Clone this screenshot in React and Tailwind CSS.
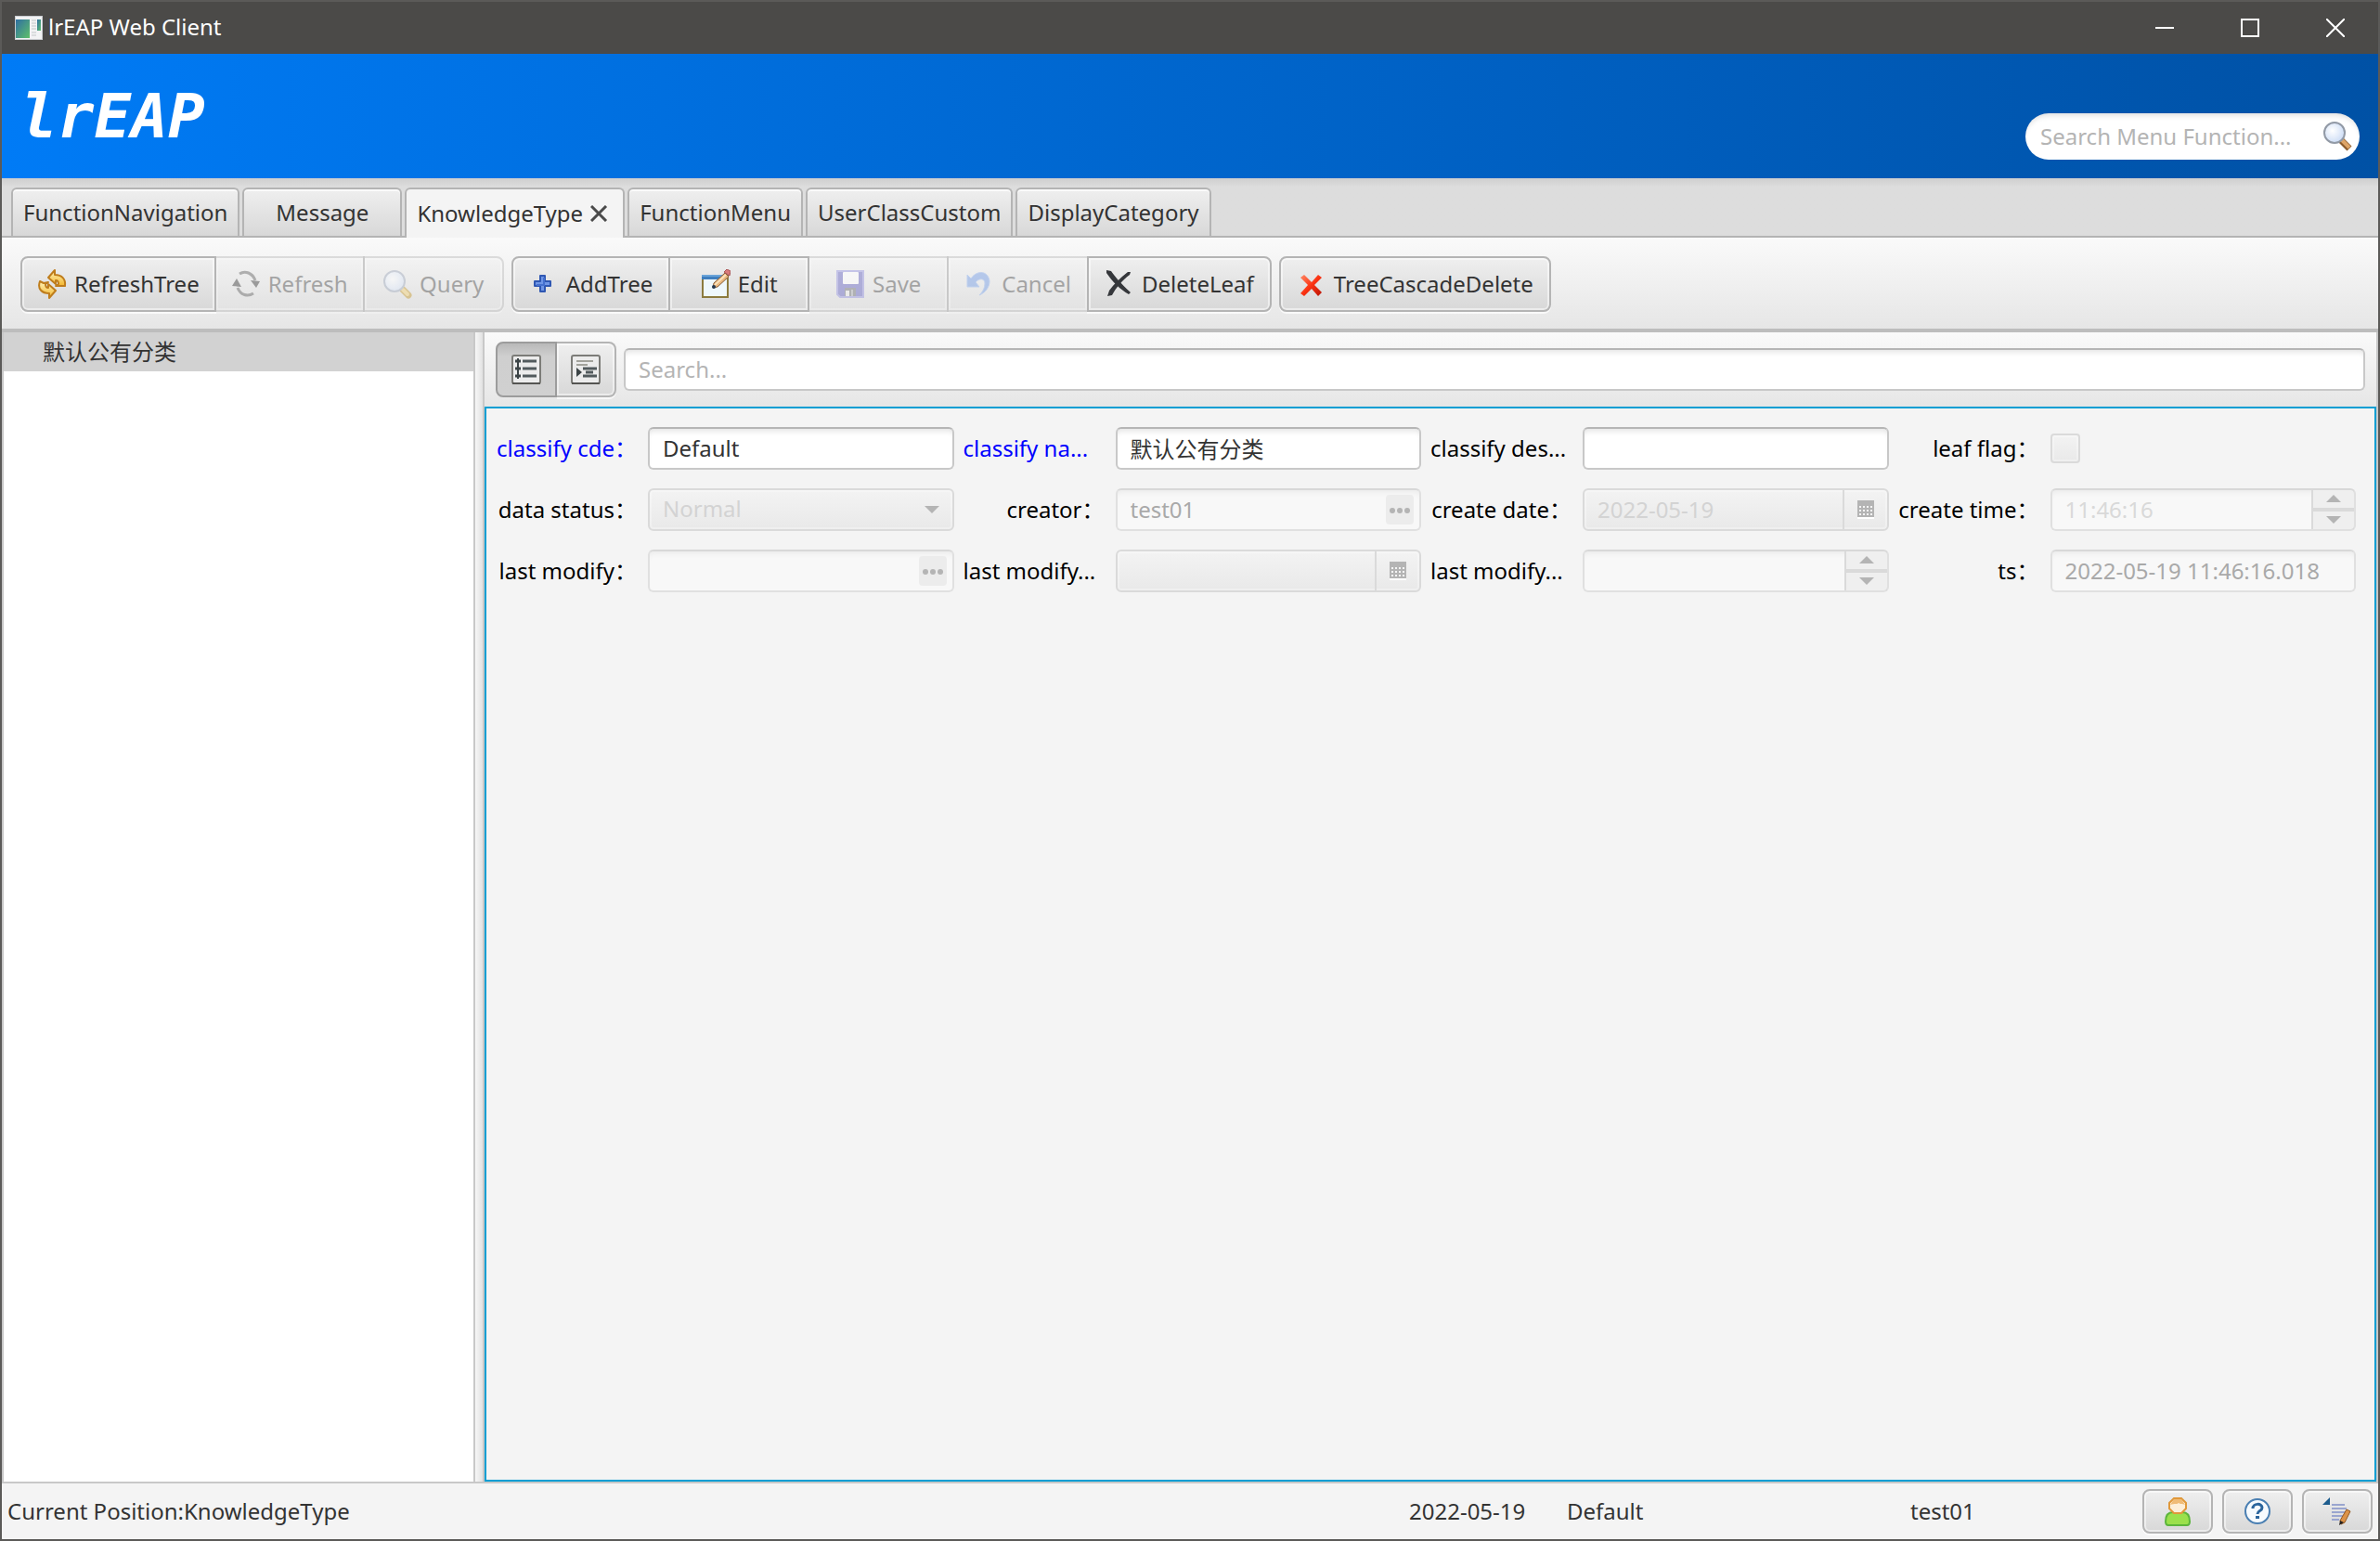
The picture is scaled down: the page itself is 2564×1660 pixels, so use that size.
import React, { useState } from "react";
import clsx from "clsx";

const AppIcon = () => (
  <svg width="30" height="26" viewBox="0 0 30 26">
    <defs>
      <linearGradient id="app" x1="0" y1="0" x2="1" y2="1">
        <stop offset="0" stopColor="#2f6fa3" />
        <stop offset="1" stopColor="#5fc06a" />
      </linearGradient>
    </defs>
    <rect x="0" y="0" width="30" height="26" fill="#c9ccd0" />
    <rect x="1" y="1" width="28" height="24" fill="#f2f3f4" />
    <rect x="1" y="4" width="15" height="20" fill="url(#app)" />
    <rect x="24" y="4" width="4" height="12" fill="url(#app)" />
    <path
      d="M18 5h5M18 8h5M18 11h5M18 14h5M18 18h5M18 21h5"
      stroke="#c3c6c9"
      strokeWidth="1"
    />
  </svg>
);

const RefreshTreeIcon = () => (
  <svg width="32" height="32" viewBox="0 0 32 32">
    <defs>
      <linearGradient id="gold" x1="0" y1="0" x2="0" y2="1">
        <stop offset="0" stopColor="#fff3b8" />
        <stop offset="1" stopColor="#f3b62e" />
      </linearGradient>
    </defs>
    <g fill="url(#gold)" stroke="#bf7d1c" strokeWidth="2" strokeLinejoin="round">
      <path d="M19 1l-7 8 8 7v-4c2 0 3 2 3 4l-3 2h10c1-7-3-12-11-12z" />
      <path d="M13 31l7-8-8-7v4c-2 0-3-2-3-4l3-2-5 1-4-2c-3 8 2 13 10 13z" />
    </g>
  </svg>
);

const RefreshIcon = () => (
  <svg width="32" height="32" viewBox="0 0 32 32" fill="none">
    <path d="M9 5c6-4 14-1 17 7" stroke="#4a4a4a" strokeWidth="3" />
    <path d="M24 26c-6 4-14 2-17-6" stroke="#4a4a4a" strokeWidth="3" />
    <path d="M21 12l10 1-4 7zM1 18l5-8 5 9z" fill="#1c1c1c" />
  </svg>
);

const LensIcon = () => (
  <svg width="32" height="32" viewBox="0 0 32 32">
    <defs>
      <radialGradient id="lens" cx="0.4" cy="0.4" r="0.7">
        <stop offset="0" stopColor="#ffffff" />
        <stop offset="1" stopColor="#c6d8f4" />
      </radialGradient>
    </defs>
    <path d="M20 20l9 9" stroke="#8a5a2c" strokeWidth="7" />
    <path d="M21 20l8 8" stroke="#dda468" strokeWidth="4" />
    <circle cx="13" cy="12" r="11" fill="url(#lens)" stroke="#929aa6" strokeWidth="2" />
  </svg>
);

const QueryIcon = () => (
  <svg width="32" height="32" viewBox="0 0 32 32">
    <path d="M22 22l6 6" stroke="#b8860b" strokeWidth="7" strokeLinecap="round" />
    <path d="M22 22l5 5" stroke="#edc45a" strokeWidth="4" strokeLinecap="round" />
    <circle cx="13" cy="13" r="11" fill="url(#lens)" stroke="#8f9bb0" strokeWidth="2" />
  </svg>
);

const PlusIcon = () => (
  <svg width="32" height="32" viewBox="0 0 32 32">
    <path
      d="M12 7h5v6h6v5h-6v6h-5v-6H6v-5h6z"
      fill="#6f96e6"
      stroke="#2f57b2"
      strokeWidth="2"
      strokeLinejoin="round"
    />
    <path d="M16 9v8H8" fill="none" stroke="#4470cf" strokeWidth="2" />
  </svg>
);

const EditIcon = () => (
  <svg width="32" height="32" viewBox="0 0 32 32">
    <rect x="2" y="7" width="27" height="23" fill="#eff8fc" stroke="#8c7b3e" strokeWidth="2" />
    <rect x="1" y="6" width="26" height="5" fill="#3f7fbf" />
    <rect x="1" y="6" width="26" height="2" fill="#6aa3d8" />
    <path d="M13 20l1-5L26 4l4 4-12 11z" fill="#e9b77d" stroke="#8a5f3a" strokeWidth="1" />
    <path d="M15 17L27 6" stroke="#fbe2bb" strokeWidth="2" />
    <path d="M25 3l3-3 4 2-1 5z" fill="#d97a7a" stroke="#a85656" strokeWidth="1" />
    <circle cx="14" cy="19" r="2" fill="#24384f" />
  </svg>
);

const SaveIcon = () => (
  <svg width="32" height="32" viewBox="0 0 32 32">
    <path d="M2 2h28v28H5l-3-3z" fill="#4c4ab5" stroke="#8280d8" strokeWidth="2" />
    <rect x="8" y="3" width="17" height="13" rx="1" fill="#fff" />
    <rect x="10" y="20" width="12" height="9" fill="#55585f" />
    <rect x="11" y="23" width="4" height="6" fill="#e8e8e8" />
    <path d="M18 22v7" stroke="#9a9da5" strokeWidth="2" />
  </svg>
);

const UndoIcon = () => (
  <svg width="32" height="32" viewBox="0 0 32 32">
    <path
      d="M3 6v13h13l-4-5c4-5 10-4 10 1 0 5-2 9-6 13 7-3 11-9 11-15C26 2 14 0 7 10z"
      fill="#5b8be0"
      stroke="#7ea5ea"
      strokeWidth="1"
    />
  </svg>
);

const CrossIcon = () => (
  <svg width="32" height="32" viewBox="0 0 32 32" fill="#35373b">
    <path d="M2 1l5 1c4 6 11 14 21 23l-2 2C17 22 8 13 2 4z" />
    <path d="M28 3l-1 3C19 12 13 19 8 28l-5 1 2-6C10 16 17 9 25 3z" />
  </svg>
);

const RedCrossIcon = () => (
  <svg width="32" height="32" viewBox="0 0 32 32" fill="none">
    <defs>
      <linearGradient id="red" x1="0" y1="0" x2="1" y2="1">
        <stop offset="0" stopColor="#ff8a66" />
        <stop offset="0.5" stopColor="#fb3212" />
        <stop offset="1" stopColor="#b81505" />
      </linearGradient>
    </defs>
    <path
      d="M4 9l4-3 8 8 7-8 4 3-8 8 8 8-4 4-7-8-8 8-4-3 8-9z"
      fill="url(#red)"
    />
  </svg>
);

const ListIcon = () => (
  <svg width="32" height="32" viewBox="0 0 32 32">
    <rect x="1" y="1" width="30" height="30" rx="2" fill="#ececec" stroke="#7c7c78" strokeWidth="2" />
    <path d="M1 31h30" stroke="#555552" strokeWidth="2" />
    <path d="M7 4v22" stroke="#3c4446" strokeWidth="2" />
    <path d="M4 7h6M4 15h6M4 23h6" stroke="#3c4446" strokeWidth="3" />
    <path d="M12 7h15M12 15h15M12 23h15" stroke="#525a5d" strokeWidth="3" />
  </svg>
);

const FormIcon = () => (
  <svg width="32" height="32" viewBox="0 0 32 32">
    <rect x="1" y="1" width="30" height="30" rx="2" fill="#ececec" stroke="#7c7c78" strokeWidth="2" />
    <path d="M1 31h30" stroke="#555552" strokeWidth="2" />
    <path d="M6 7h18M6 11h12" stroke="#a3a39c" strokeWidth="2" />
    <path d="M13 15h15M16 19h8M13 23h15" stroke="#525a5d" strokeWidth="3" />
    <path d="M6 14l6 5-6 5z" fill="#3c4446" />
  </svg>
);

const UserIcon = () => (
  <svg width="32" height="32" viewBox="0 0 32 32">
    <path
      d="M3 27c0-7 3-10 8-10h10c5 0 8 3 8 10 0 2-1 4-3 4H6c-2 0-3-2-3-4z"
      fill="#9be04c"
      stroke="#5cb53c"
      strokeWidth="2"
    />
    <path
      d="M12 2h8l5 5v6l-5 5h-8l-5-5V7z"
      fill="#fdeed8"
      stroke="#e0983a"
      strokeWidth="2"
    />
    <path d="M8 9l4-6h8l4 6c-4-2-4 0-7-2-2 2-4 0-9 2z" fill="#f0bb76" />
  </svg>
);

const HelpIcon = () => (
  <svg width="32" height="32" viewBox="0 0 32 32" fill="none">
    <circle cx="16" cy="16" r="13" fill="#f7fbfe" stroke="#4a7fb2" strokeWidth="2" />
    <path d="M11 13c0-6 10-6 10-1 0 4-5 3-5 7" stroke="#2b659c" strokeWidth="3" />
    <rect x="14" y="21" width="4" height="3" fill="#2b659c" />
  </svg>
);

const NoteIcon = () => (
  <svg width="32" height="32" viewBox="0 0 32 32">
    <path d="M8 1v8H0z" fill="#1d5c8d" />
    <path d="M10 9h14M10 13h16M10 17h16M10 21h12M10 25h8" stroke="#9aa5cf" strokeWidth="2" />
    <path d="M19 26l7-12 4 2-6 12-4 2z" fill="#dc9349" stroke="#93571f" strokeWidth="1" />
    <path d="M18 31l1-5 4 2z" fill="#222" />
  </svg>
);

const CalendarIcon = () => (
  <svg width="18" height="20" viewBox="0 0 18 20">
    <rect width="18" height="18" fill="#b4b4b4" />
    <path d="M2 7h14M2 11h14M2 15h14" stroke="#f4f4f4" strokeWidth="2" strokeDasharray="2 2" />
    <path d="M0 19h18" stroke="#fff" strokeWidth="2" />
  </svg>
);

const Triangle = ({ up }) => (
  <svg width="16" height="9" viewBox="0 0 16 9">
    <path d={up ? "M8 0l8 8H0z" : "M0 0h16L8 8z"} fill="#b4b4b4" />
  </svg>
);

const tabs = [
  "FunctionNavigation",
  "Message",
  "KnowledgeType",
  "FunctionMenu",
  "UserClassCustom",
  "DisplayCategory",
];

const toolGroups = [
  [
    { label: "RefreshTree", icon: RefreshTreeIcon },
    { label: "Refresh", icon: RefreshIcon, disabled: true },
    { label: "Query", icon: QueryIcon, disabled: true },
  ],
  [
    { label: "AddTree", icon: PlusIcon },
    { label: "Edit", icon: EditIcon },
    { label: "Save", icon: SaveIcon, disabled: true },
    { label: "Cancel", icon: UndoIcon, disabled: true },
    { label: "DeleteLeaf", icon: CrossIcon },
  ],
  [{ label: "TreeCascadeDelete", icon: RedCrossIcon }],
];

const fields = [
  { id: "cde", label: "classify cde：", type: "text", value: "Default", required: true },
  { id: "name", label: "classify na...", type: "text", value: "默认公有分类", required: true },
  { id: "desc", label: "classify des...", type: "text", value: "" },
  { id: "leaf", label: "leaf flag：", type: "check" },
  { id: "status", label: "data status：", type: "select", value: "Normal" },
  { id: "creator", label: "creator：", type: "lookup", value: "test01" },
  { id: "cdate", label: "create date：", type: "date", value: "2022-05-19" },
  { id: "ctime", label: "create time：", type: "time", value: "11:46:16" },
  { id: "modifier", label: "last modify：", type: "lookup", value: "" },
  { id: "mdate", label: "last modify...", type: "date", value: "" },
  { id: "mtime", label: "last modify...", type: "time", value: "" },
  { id: "ts", label: "ts：", type: "readonly", value: "2022-05-19 11:46:16.018" },
];

const raised =
  "bg-linear-to-b from-[#efefef] to-[#d8d8d8] border-2 border-[#b4b4b4] shadow-[inset_0_0_0_2px_rgba(255,255,255,0.5),0_2px_0_rgba(255,255,255,0.7)]";
const editable =
  "border-2 border-[#c8c8c8] border-t-[#b5b5b5] bg-white shadow-[inset_0_6px_6px_-4px_rgba(0,0,0,0.12)]";
const faded =
  "border-2 border-[#e0e0e0] border-t-[#d8d8d8] bg-[#f8f8f8] shadow-[inset_0_6px_6px_-4px_rgba(0,0,0,0.06)]";
const fadedRaised =
  "border-2 border-[#dadada] bg-linear-to-b from-[#f3f3f3] to-[#e9e9e9] shadow-[inset_0_0_0_2px_rgba(255,255,255,0.3)]";

const Field = ({ field }) => {
  const { id, type } = field;
  const [value, setValue] = useState(field.value || "");
  const base = "h-[46px] w-full rounded-md px-[14px] pb-[2px] outline-none";

  switch (type) {
    case "check":
      return (
        <input
          id={id}
          type="checkbox"
          disabled
          className={clsx("size-8 appearance-none rounded", fadedRaised)}
        />
      );
    case "select":
      return (
        <div className="relative">
          <select
            id={id}
            disabled
            defaultValue={value}
            className={clsx(base, fadedRaised, "appearance-none text-[#d3d3d3] opacity-100")}
          >
            <option>{value}</option>
          </select>
          <span className="absolute inset-y-0 right-4 flex items-center">
            <Triangle />
          </span>
        </div>
      );
    case "lookup":
      return (
        <div className={clsx("flex h-[46px] items-center rounded-md pr-[6px]", faded)}>
          <input
            id={id}
            readOnly
            value={value}
            className="min-w-0 flex-1 px-[14px] text-[#a9a9a9] outline-none"
          />
          <button
            type="button"
            aria-label="Choose"
            className="flex h-8 w-[30px] items-center justify-center rounded bg-[#ececec]"
          >
            <svg width="24" height="8" viewBox="0 0 24 8" fill="#b4b4b4">
              <circle cx="4" cy="5" r="3" />
              <circle cx="12" cy="5" r="3" />
              <circle cx="20" cy="5" r="3" />
            </svg>
          </button>
        </div>
      );
    case "date":
      return (
        <div className={clsx("flex h-[46px] rounded-md", fadedRaised)}>
          <input
            id={id}
            disabled
            value={value}
            className="min-w-0 flex-1 px-[14px] text-[#d3d3d3]"
          />
          <button
            disabled
            aria-label="Pick date"
            className="flex w-[48px] items-center justify-center border-l-2 border-[#dadada]"
          >
            <CalendarIcon />
          </button>
        </div>
      );
    case "time":
      return (
        <div className={clsx("flex h-[46px] rounded-md", faded)}>
          <input
            id={id}
            disabled
            value={value}
            className="min-w-0 flex-1 px-[14px] text-[#d9d9d9]"
          />
          <div className="flex w-[46px] flex-col gap-1 border-l-2 border-[#dadada] bg-[#dadada]">
            <button
              disabled
              aria-label="Up"
              className="flex flex-1 items-center justify-center rounded-tr bg-[#efefef]"
            >
              <Triangle up />
            </button>
            <button
              disabled
              aria-label="Down"
              className="flex flex-1 items-center justify-center rounded-br bg-[#efefef]"
            >
              <Triangle />
            </button>
          </div>
        </div>
      );
    case "readonly":
      return (
        <input id={id} readOnly value={value} className={clsx(base, faded, "text-[#a9a9a9]")} />
      );
    default:
      return (
        <input
          id={id}
          value={value}
          onChange={(e) => setValue(e.target.value)}
          className={clsx(base, editable)}
        />
      );
  }
};

const TitleBar = () => (
  <div className="flex h-14 items-center bg-[#4b4a48] pl-[14px] text-white">
    <AppIcon />
    <h1 className="flex-1 pb-[2px] pl-[6px]">lrEAP Web Client</h1>
    <button aria-label="Minimize" className="flex h-full w-[92px] items-center justify-center">
      <svg width="20" height="20" viewBox="0 0 20 20">
        <path d="M0 10h20" stroke="#fff" strokeWidth="2" />
      </svg>
    </button>
    <button aria-label="Maximize" className="flex h-full w-[92px] items-center justify-center">
      <svg width="20" height="20" viewBox="0 0 20 20">
        <rect x="1" y="1" width="18" height="18" fill="none" stroke="#fff" strokeWidth="2" />
      </svg>
    </button>
    <button aria-label="Close" className="flex h-full w-[92px] items-center justify-center">
      <svg width="20" height="20" viewBox="0 0 20 20">
        <path d="M0 0l20 20M20 0L0 20" stroke="#fff" strokeWidth="2" />
      </svg>
    </button>
  </div>
);

const App = () => {
  const [activeTab, setActiveTab] = useState("KnowledgeType");
  const [view, setView] = useState("list");

  return (
    <div className="flex h-screen flex-col border-2 border-[#5b5a58] bg-[#f4f4f4] font-['Noto_Sans','Noto_Sans_CJK_SC',sans-serif] text-[24px] leading-8 text-[#333333]">
      <TitleBar />

      <header className="flex h-[134px] items-end justify-between bg-linear-to-r from-[#007bf6] to-[#0051a5] px-5 pb-5">
        <div className="pb-[14px] font-['DejaVu_Sans_Mono',monospace] text-[66px] leading-[64px] font-bold text-white italic">
          lrEAP
        </div>
        <div className="flex h-[50px] w-[360px] items-center rounded-full bg-white pr-2 pl-4 shadow-[inset_0_6px_6px_-4px_rgba(0,0,0,0.15)]">
          <input
            aria-label="Search menu"
            placeholder="Search Menu Function..."
            className="min-w-0 flex-1 outline-none placeholder:text-[#b4b4b4]"
          />
          <LensIcon />
        </div>
      </header>

      <nav className="flex h-16 items-end gap-[3px] border-b-2 border-[#b4b4b4] bg-linear-to-b from-[#cfcfcf] via-[#dddddd] via-15% to-[#dddddd] pl-[10px]">
        {tabs.map((tab) => (
          <button
            key={tab}
            onClick={() => setActiveTab(tab)}
            className={clsx(
              "flex min-w-[172px] items-center justify-center gap-2 rounded-t-md border-2 border-b-0 border-[#b4b4b4] px-[11px]",
              tab === activeTab
                ? "-mb-[2px] h-[54px] bg-[#f4f4f4]"
                : "h-[52px] bg-linear-to-b from-[#efefef] to-[#d8d8d8] shadow-[inset_0_2px_0_rgba(255,255,255,0.7)]"
            )}
          >
            {tab}
            {tab === activeTab && (
              <svg width="24" height="18" viewBox="0 0 24 18">
                <path d="M1 1l16 16M17 1L1 17" stroke="#4a4a4a" strokeWidth="3" />
              </svg>
            )}
          </button>
        ))}
      </nav>

      <div className="flex h-[102px] items-center gap-2 border-b-4 border-[#bdbdbd] bg-linear-to-b from-[#fafafa] to-[#e6e6e6] px-5 pt-[2px]">
        {toolGroups.map((group, i) => (
          <div key={i} className="flex">
            {group.map(({ label, icon: Icon, disabled }) => (
              <button
                key={label}
                disabled={disabled}
                className={clsx(
                  "-ml-[2px] flex h-[60px] min-w-[152px] items-center justify-center gap-2 first:ml-0 first:rounded-l-lg last:rounded-r-lg disabled:opacity-40",
                  i === 0 ? "px-4" : "px-[17px]",
                  raised
                )}
              >
                <Icon />
                {label}
              </button>
            ))}
          </div>
        ))}
      </div>

      <div className="flex min-h-0 flex-1 border-b-2 border-[#c8c8c8]">
        <aside className="w-[510px] shrink-0 border-x-2 border-[#c8c8c8] bg-white">
          <ul role="tree">
            <li role="treeitem" aria-selected="true" className="flex h-[42px] items-center bg-[#d2d2d2] pl-[42px]">
              默认公有分类
            </li>
          </ul>
        </aside>
        <div className="w-[10px] shrink-0 border-r-2 border-[#c8c8c8] bg-linear-to-r from-[#f7f7f7] to-[#e2e2e2]" />

        <main className="flex min-w-0 flex-1 flex-col border-r-2 border-[#c8c8c8]">
          <div className="flex h-20 items-center gap-2 bg-linear-to-b from-[#fafafa] to-[#e6e6e6] px-3">
            <div className="flex">
              <button
                aria-label="List view"
                onClick={() => setView("list")}
                className={clsx(
                  "flex h-[60px] w-[66px] items-center justify-center rounded-l-lg border-2",
                  view === "list"
                    ? "border-[#9c9c9c] bg-linear-to-b from-[#b9b9b9] via-[#cfcfcf] via-25% to-[#d0d0d0]"
                    : raised
                )}
              >
                <ListIcon />
              </button>
              <button
                aria-label="Form view"
                onClick={() => setView("form")}
                className={clsx(
                  "flex h-[60px] w-16 items-center justify-center rounded-r-lg border-l-0",
                  raised
                )}
              >
                <FormIcon />
              </button>
            </div>
            <input
              aria-label="Search"
              placeholder="Search..."
              className={clsx(
                "h-[46px] min-w-0 flex-1 rounded-md px-[14px] pb-[2px] outline-none placeholder:text-[#b4b4b4]",
                editable
              )}
            />
          </div>

          <form className="flex-1 border-2 border-[#039ed3] pt-5 pr-5 pl-[10px]">
            <div className="grid grid-cols-4 gap-x-[10px] gap-y-5">
              {fields.map((field) => (
                <div key={field.id} className="flex h-[46px] items-center gap-3">
                  <label
                    htmlFor={field.id}
                    className={clsx(
                      "w-[152px] shrink-0 whitespace-nowrap",
                      field.required ? "text-[#0000ff]" : "text-black",
                      field.label.endsWith("...") ? "text-left" : "text-right"
                    )}
                  >
                    {field.label}
                  </label>
                  <div className="flex min-w-0 flex-1 flex-col">
                    <Field field={field} />
                  </div>
                </div>
              ))}
            </div>
          </form>
        </main>
      </div>

      <footer className="flex h-[60px] items-center pr-[6px] pl-[6px]">
        <span className="flex-1">Current Position:KnowledgeType</span>
        <span className="w-[170px]">2022-05-19</span>
        <span className="w-[370px]">Default</span>
        <span className="w-[250px]">test01</span>
        <div className="flex gap-[10px]">
          <button aria-label="User" className={clsx("flex h-12 w-[76px] items-center justify-center rounded-lg", raised)}>
            <UserIcon />
          </button>
          <button aria-label="Help" className={clsx("flex h-12 w-[76px] items-center justify-center rounded-lg", raised)}>
            <HelpIcon />
          </button>
          <button aria-label="Notes" className={clsx("flex h-12 w-[76px] items-center justify-center rounded-lg", raised)}>
            <NoteIcon />
          </button>
        </div>
      </footer>
    </div>
  );
};

export default App;
